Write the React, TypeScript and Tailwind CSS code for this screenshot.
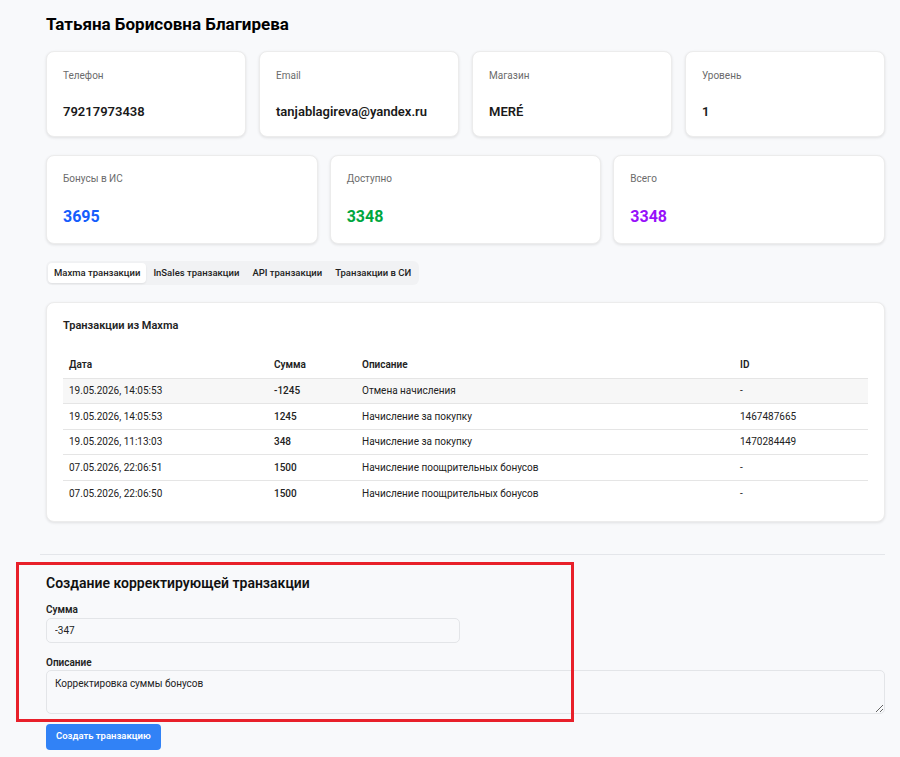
import React from 'react';

const font = { fontFamily: 'Roboto, "Noto Sans", sans-serif' };

const infoCards = [
  { label: 'Телефон', value: '79217973438' },
  { label: 'Email', value: 'tanjablagireva@yandex.ru' },
  { label: 'Магазин', value: 'MERÉ' },
  { label: 'Уровень', value: '1' },
];

const bonusCards = [
  { label: 'Бонусы в ИС', value: '3695', color: 'text-blue-600' },
  { label: 'Доступно', value: '3348', color: 'text-green-600' },
  { label: 'Всего', value: '3348', color: 'text-purple-600' },
];

const tabs = ['Maxma транзакции', 'InSales транзакции', 'API транзакции', 'Транзакции в СИ'];

const rows = [
  { date: '19.05.2026, 14:05:53', sum: '-1245', desc: 'Отмена начисления', id: '-' },
  { date: '19.05.2026, 14:05:53', sum: '1245', desc: 'Начисление за покупку', id: '1467487665' },
  { date: '19.05.2026, 11:13:03', sum: '348', desc: 'Начисление за покупку', id: '1470284449' },
  { date: '07.05.2026, 22:06:51', sum: '1500', desc: 'Начисление поощрительных бонусов', id: '-' },
  { date: '07.05.2026, 22:06:50', sum: '1500', desc: 'Начисление поощрительных бонусов', id: '-' },
];

export default function App() {
  return (
    <div className="relative min-h-[757px] bg-[#f8f9fb] text-[#111] pl-[46px] pr-[15px] pt-[13px] pb-[7px]" style={font}>
      {/* Customer name */}
      <h1 className="text-[17px] font-bold leading-[22px] text-black">Татьяна Борисовна Благирева</h1>

      {/* Contact cards */}
      <div className="grid grid-cols-4 gap-[13px] mt-[16px]">
        {infoCards.map((c) => (
          <div key={c.label} className="h-[86px] bg-white rounded-[8px] border border-[#ececec] shadow-[0_1px_3px_rgba(0,0,0,0.1)] px-[16px] pt-[17px]">
            <div className="text-[10px] leading-[14px] text-[#6b6b6b]">{c.label}</div>
            <div className="mt-[20px] text-[13px] leading-[18px] font-semibold text-[#1a1a1a]">{c.value}</div>
          </div>
        ))}
      </div>

      {/* Bonus cards */}
      <div className="grid grid-cols-3 gap-[12px] mt-[18px]">
        {bonusCards.map((c) => (
          <div key={c.label} className="h-[89px] bg-white rounded-[8px] border border-[#ececec] shadow-[0_1px_3px_rgba(0,0,0,0.1)] px-[16px] pt-[16px]">
            <div className="text-[10px] leading-[14px] text-[#6b6b6b]">{c.label}</div>
            <div className={`mt-[20px] text-[16px] leading-[22px] font-bold ${c.color}`}>{c.value}</div>
          </div>
        ))}
      </div>

      {/* Tabs */}
      <div className="inline-flex items-center gap-[1px] mt-[17px] p-[2px] rounded-[6px] bg-[#f1f2f4]">
        {tabs.map((t, i) => (
          <div
            key={t}
            className={`px-[6px] h-[20px] flex items-center text-[9.5px] font-medium rounded-[4px] ${
              i === 0 ? 'bg-white shadow-[0_1px_2px_rgba(0,0,0,0.08)] text-[#222]' : 'text-[#222]'
            }`}
          >
            {t}
          </div>
        ))}
      </div>

      {/* Transactions card */}
      <div className="mt-[17px] bg-white rounded-[8px] border border-[#ececec] shadow-[0_1px_3px_rgba(0,0,0,0.1)] px-[16px] pt-[15px] pb-[15px]">
        <div className="text-[11px] font-semibold leading-[15px] text-[#222]">Транзакции из Maxma</div>
        <table className="w-full mt-[19px] text-[10px] text-[#222]">
          <thead>
            <tr className="h-[26px] border-b border-[#e5e5e5]">
              <th className="text-left font-semibold pl-[6px] w-[211px]">Дата</th>
              <th className="text-left font-semibold w-[88px]">Сумма</th>
              <th className="text-left font-semibold w-[378px]">Описание</th>
              <th className="text-left font-semibold">ID</th>
            </tr>
          </thead>
          <tbody>
            {rows.map((r, i) => (
              <tr key={i} className={`h-[25.5px] border-b border-[#e5e5e5] last:border-b-0 ${i === 0 ? 'bg-[#f7f7f7]' : ''}`}>
                <td className="pl-[6px]">{r.date}</td>
                <td className="font-medium">{r.sum}</td>
                <td>{r.desc}</td>
                <td>{r.id}</td>
              </tr>
            ))}
          </tbody>
        </table>
      </div>

      <hr className="mt-[32px] -ml-[6px] border-t border-[#e4e6ea]" />

      {/* Correction form */}
      <div className="mt-[19px]">
        <h2 className="text-[14px] font-semibold leading-[18px] text-[#111]">Создание корректирующей транзакции</h2>
        <label className="block mt-[11px] text-[10px] font-semibold leading-[14px] text-[#222]">Сумма</label>
        <input
          readOnly
          value="-347"
          className="block mt-[1px] w-[414px] h-[25px] px-[8px] text-[10px] bg-[#f8f9fb] border border-[#e3e5e8] rounded-[5px] text-[#222]"
          style={font}
        />
        <label className="block mt-[13px] text-[10px] font-semibold leading-[14px] text-[#222]">Описание</label>
        <textarea
          readOnly
          value="Корректировка суммы бонусов"
          className="block w-full h-[44px] px-[8px] py-[5px] text-[10px] bg-[#f8f9fb] border border-[#e3e5e8] rounded-[5px] text-[#222]"
          style={font}
        />
        <button className="mt-[10px] h-[26px] px-[10px] rounded-[4px] bg-[#3182f6] text-white text-[9.5px] font-semibold" style={font}>
          Создать транзакцию
        </button>
      </div>

      {/* Annotation highlight */}
      <div className="absolute left-[16px] top-[562px] w-[558px] h-[160px] border-[3px] border-[#e8202a] pointer-events-none" />
    </div>
  );
}
